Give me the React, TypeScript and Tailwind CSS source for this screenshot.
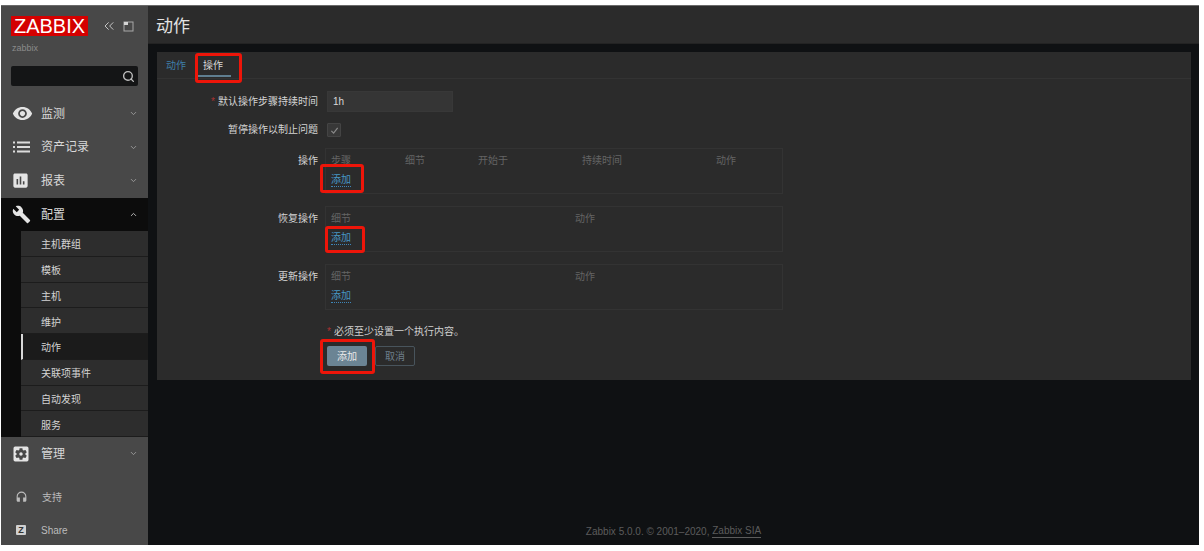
import { ChevronDown, ChevronUp, ChevronsLeft, Search } from 'lucide-react';
import {
  MdAssessment,
  MdBuild,
  MdHeadset,
  MdRemoveRedEye,
  MdSettingsApplications,
} from 'react-icons/md';

const font = { fontFamily: '"Liberation Sans", "Noto Sans CJK SC", sans-serif' };

const subItems = ['主机群组', '模板', '主机', '维护', '动作', '关联项事件', '自动发现', '服务'];

function ListIcon() {
  return (
    <svg className="h-[12px] w-[17px]" viewBox="0 0 17 12" fill="#dcdcdc">
      <rect x="0" y="0.5" width="2" height="2" />
      <rect x="0" y="5" width="2" height="2" />
      <rect x="0" y="9.5" width="2" height="2" />
      <rect x="4" y="0.5" width="13" height="2" />
      <rect x="4" y="5" width="13" height="2" />
      <rect x="4" y="9.5" width="13" height="2" />
    </svg>
  );
}

function MenuRow({ icon, label, open }: { icon: React.ReactNode; label: string; open?: boolean }) {
  return (
    <div className={`flex h-[33.5px] items-center pl-3 pr-[10px] ${open ? 'bg-[#0c0c0c]' : ''}`}>
      <span className="flex w-[28px] shrink-0 items-center text-[#e4e4e4]">{icon}</span>
      <span className={`flex-1 text-[12px] text-[#d8d8d8] ${open ? 'pt-[2px]' : ''}`}>{label}</span>
      {open ? (
        <ChevronUp className="h-[9px] w-[9px] text-[#bbbbbb]" strokeWidth={2.5} />
      ) : (
        <ChevronDown className="h-[9px] w-[9px] text-[#9a9a9a]" strokeWidth={2.5} />
      )}
    </div>
  );
}

function Sidebar() {
  return (
    <aside className="flex w-[147px] shrink-0 flex-col bg-[#484848]">
      <div className="flex h-[192px] flex-col">
        <div className="flex items-center pl-[10px] pt-[10px]">
          <span className="flex h-[20px] w-[77px] items-center justify-center bg-[#d40000] text-[20px] leading-none text-white">
            ZABBIX
          </span>
          <ChevronsLeft className="ml-[13px] h-[16px] w-[16px] text-[#c4c4c4]" strokeWidth={1.5} />
          <svg className="ml-[6px] h-[11px] w-[11px]" viewBox="0 0 11 11" fill="none">
            <rect x="1" y="1" width="9" height="9" stroke="#a8a8a8" strokeWidth="1" />
            <path d="M1 1h4v3H1z" fill="#d4d4d4" />
          </svg>
        </div>
        <div className="pl-[11px] pt-[6px] text-[9px] leading-[12px] text-[#8b8b8b]">zabbix</div>
        <div className="ml-[10px] mt-[12px] flex h-[20px] w-[127px] items-center justify-end rounded-[2px] bg-[#141516] pr-[3px]">
          <Search className="h-[13px] w-[13px] text-[#c0c0c0]" strokeWidth={2.5} />
        </div>
        <div className="mt-[11px]">
          <MenuRow icon={<MdRemoveRedEye size={21} className="-ml-[1px]" />} label="监测" />
          <MenuRow icon={<ListIcon />} label="资产记录" />
          <MenuRow icon={<MdAssessment size={19} className="-ml-[2px]" />} label="报表" />
        </div>
      </div>

      <div className="bg-[#0c0c0c]">
        <MenuRow icon={<MdBuild size={19} className="-ml-[1px]" />} label="配置" open />
        <div className="ml-[20px]">
          {subItems.map(item => (
            <div
              key={item}
              className={`flex h-[25.75px] items-center border-b border-[#1c1c1c] pt-[3px] text-[10px] text-[#d4d4d4] ${
                item === '动作' ? 'border-l-2 bg-[#1b1b1b] pl-[18px] [border-left-color:#d8d8d8]' : 'bg-[#2d2d2d] pl-[20px]'
              }`}
            >
              {item}
            </div>
          ))}
        </div>
      </div>

      <div className="flex flex-1 flex-col">
        <MenuRow icon={<MdSettingsApplications size={20} className="-ml-[2px]" />} label="管理" />
        <div className="mt-[10px] flex h-[33px] items-center pl-[14px] text-[10px] text-[#bcbcbc]">
          <MdHeadset size={13} className="mr-[14px]" />
          支持
        </div>
        <div className="flex h-[33px] items-center pl-[15px] text-[10px] text-[#bcbcbc]">
          <span className="mr-[15px] flex h-[10px] w-[10px] items-center justify-center rounded-[1px] bg-[#d0d0d0] text-[9px] font-bold leading-none text-[#333333]">
            Z
          </span>
          Share
        </div>
      </div>
    </aside>
  );
}

function FormRow({ label, required, children, labelTop }: { label: string; required?: boolean; children: React.ReactNode; labelTop?: boolean }) {
  return (
    <div className={`flex ${labelTop ? 'items-start' : 'items-center'}`}>
      <div className={`w-[170px] shrink-0 pr-[9px] text-right text-[10px] leading-[14px] text-[#d4d4d4] ${labelTop ? 'pt-[6px]' : ''}`}>
        {required && <span className="mr-[3px] text-[#a83232]">*</span>}
        {label}
      </div>
      {children}
    </div>
  );
}

function OpsTable({ columns, template }: { columns: string[]; template: string }) {
  return (
    <div className="-ml-[2px] h-[46px] w-[458px] border border-[#333333] pl-[5px] pt-[5px]">
      <div className={`grid text-[10px] leading-[14px] text-[#646464] ${template}`}>
        {columns.map(col => (
          <span key={col}>{col}</span>
        ))}
      </div>
      <a className="mt-[5px] block w-fit border-b border-dotted border-[#3f86b8] text-[10px] leading-[13px] text-[#4796c4]">
        添加
      </a>
    </div>
  );
}

function RedBox({ className }: { className: string }) {
  return <div className={`pointer-events-none absolute rounded-[3px] border-[3px] border-[#ee1509] ${className}`} />;
}

export default function App() {
  return (
    <div className="h-[551px] w-[1204px] bg-white pb-[6px] pl-[1px] pr-[5px] pt-[5px]" style={font}>
      <div className="relative flex h-full border-t border-[#6a6a6a] bg-[#0f1113]">
        <Sidebar />
        <main className="flex flex-1 flex-col">
          <header className="flex h-[38px] shrink-0 items-center border-b border-[#232323] bg-[#2b2b2b] pl-[8px] pt-[5px] text-[17px] text-[#e2e2e2]">
            动作
          </header>
          <section className="ml-[9px] mr-[8px] mt-[8px] h-[328px] bg-[#2b2b2b]">
            <div className="flex h-[27px] border-b border-[#333333] pl-[9px] text-[10px]">
              <span className="pt-[6px] text-[#3f7fa8]">动作</span>
              <span className="ml-[12px] h-[25px] border-b-2 border-[#5f7f91] pl-[5px] pr-[8px] pt-[6px] text-[#d8d8d8]">操作</span>
            </div>
            <div className="pt-[12px]">
              <FormRow label="默认操作步骤持续时间" required>
                <div className="flex h-[21px] w-[126px] items-center border border-[#383838] bg-[#353535] pl-[5px] text-[10px] text-[#d8d8d8]">
                  1h
                </div>
              </FormRow>
              <div className="mt-[11px]">
                <FormRow label="暂停操作以制止问题">
                  <div className="flex h-[14px] w-[14px] items-center justify-center rounded-[1px] border border-[#444444] bg-[#383838]">
                    <svg className="h-[9px] w-[9px]" viewBox="0 0 10 10" fill="none">
                      <path d="M1.5 5.5 4 8l4.5-6" stroke="#8a8a8a" strokeWidth="1.3" />
                    </svg>
                  </div>
                </FormRow>
              </div>
              <div className="mt-[11px]">
                <FormRow label="操作" labelTop>
                  <OpsTable
                    columns={['步骤', '细节', '开始于', '持续时间', '动作']}
                    template="grid-cols-[74px_73px_104px_134px_1fr]"
                  />
                </FormRow>
              </div>
              <div className="mt-[12px]">
                <FormRow label="恢复操作" labelTop>
                  <OpsTable columns={['细节', '动作']} template="grid-cols-[244px_1fr]" />
                </FormRow>
              </div>
              <div className="mt-[12px]">
                <FormRow label="更新操作" labelTop>
                  <OpsTable columns={['细节', '动作']} template="grid-cols-[244px_1fr]" />
                </FormRow>
              </div>
              <div className="pl-[170px] pt-[15px] text-[10px] leading-[14px] text-[#d0d0d0]">
                <span className="mr-[3px] text-[#a83232]">*</span>必须至少设置一个执行内容。
              </div>
              <div className="flex gap-[8px] pl-[170px] pt-[7px] text-[10px]">
                <div className="flex h-[20px] w-[40px] items-center justify-center rounded-[2px] bg-[#6b8494] text-[#e8e8e8]">添加</div>
                <div className="flex h-[20px] w-[40px] items-center justify-center rounded-[2px] border border-[#48545c] text-[#6e7f8a]">取消</div>
              </div>
            </div>
          </section>
          <footer className="mt-auto flex h-[28px] items-center justify-center text-[10px] text-[#5c5c5c]">
            Zabbix 5.0.0. © 2001–2020,&nbsp;<span className="border-b border-[#5c5c5c] leading-[12px]">Zabbix SIA</span>
          </footer>
        </main>
        <RedBox className="left-[194px] top-[47px] h-[30px] w-[47px]" />
        <RedBox className="left-[319px] top-[158px] h-[29px] w-[44px]" />
        <RedBox className="left-[324px] top-[220px] h-[27px] w-[40px]" />
        <RedBox className="left-[319px] top-[333px] h-[35px] w-[55px]" />
      </div>
    </div>
  );
}
